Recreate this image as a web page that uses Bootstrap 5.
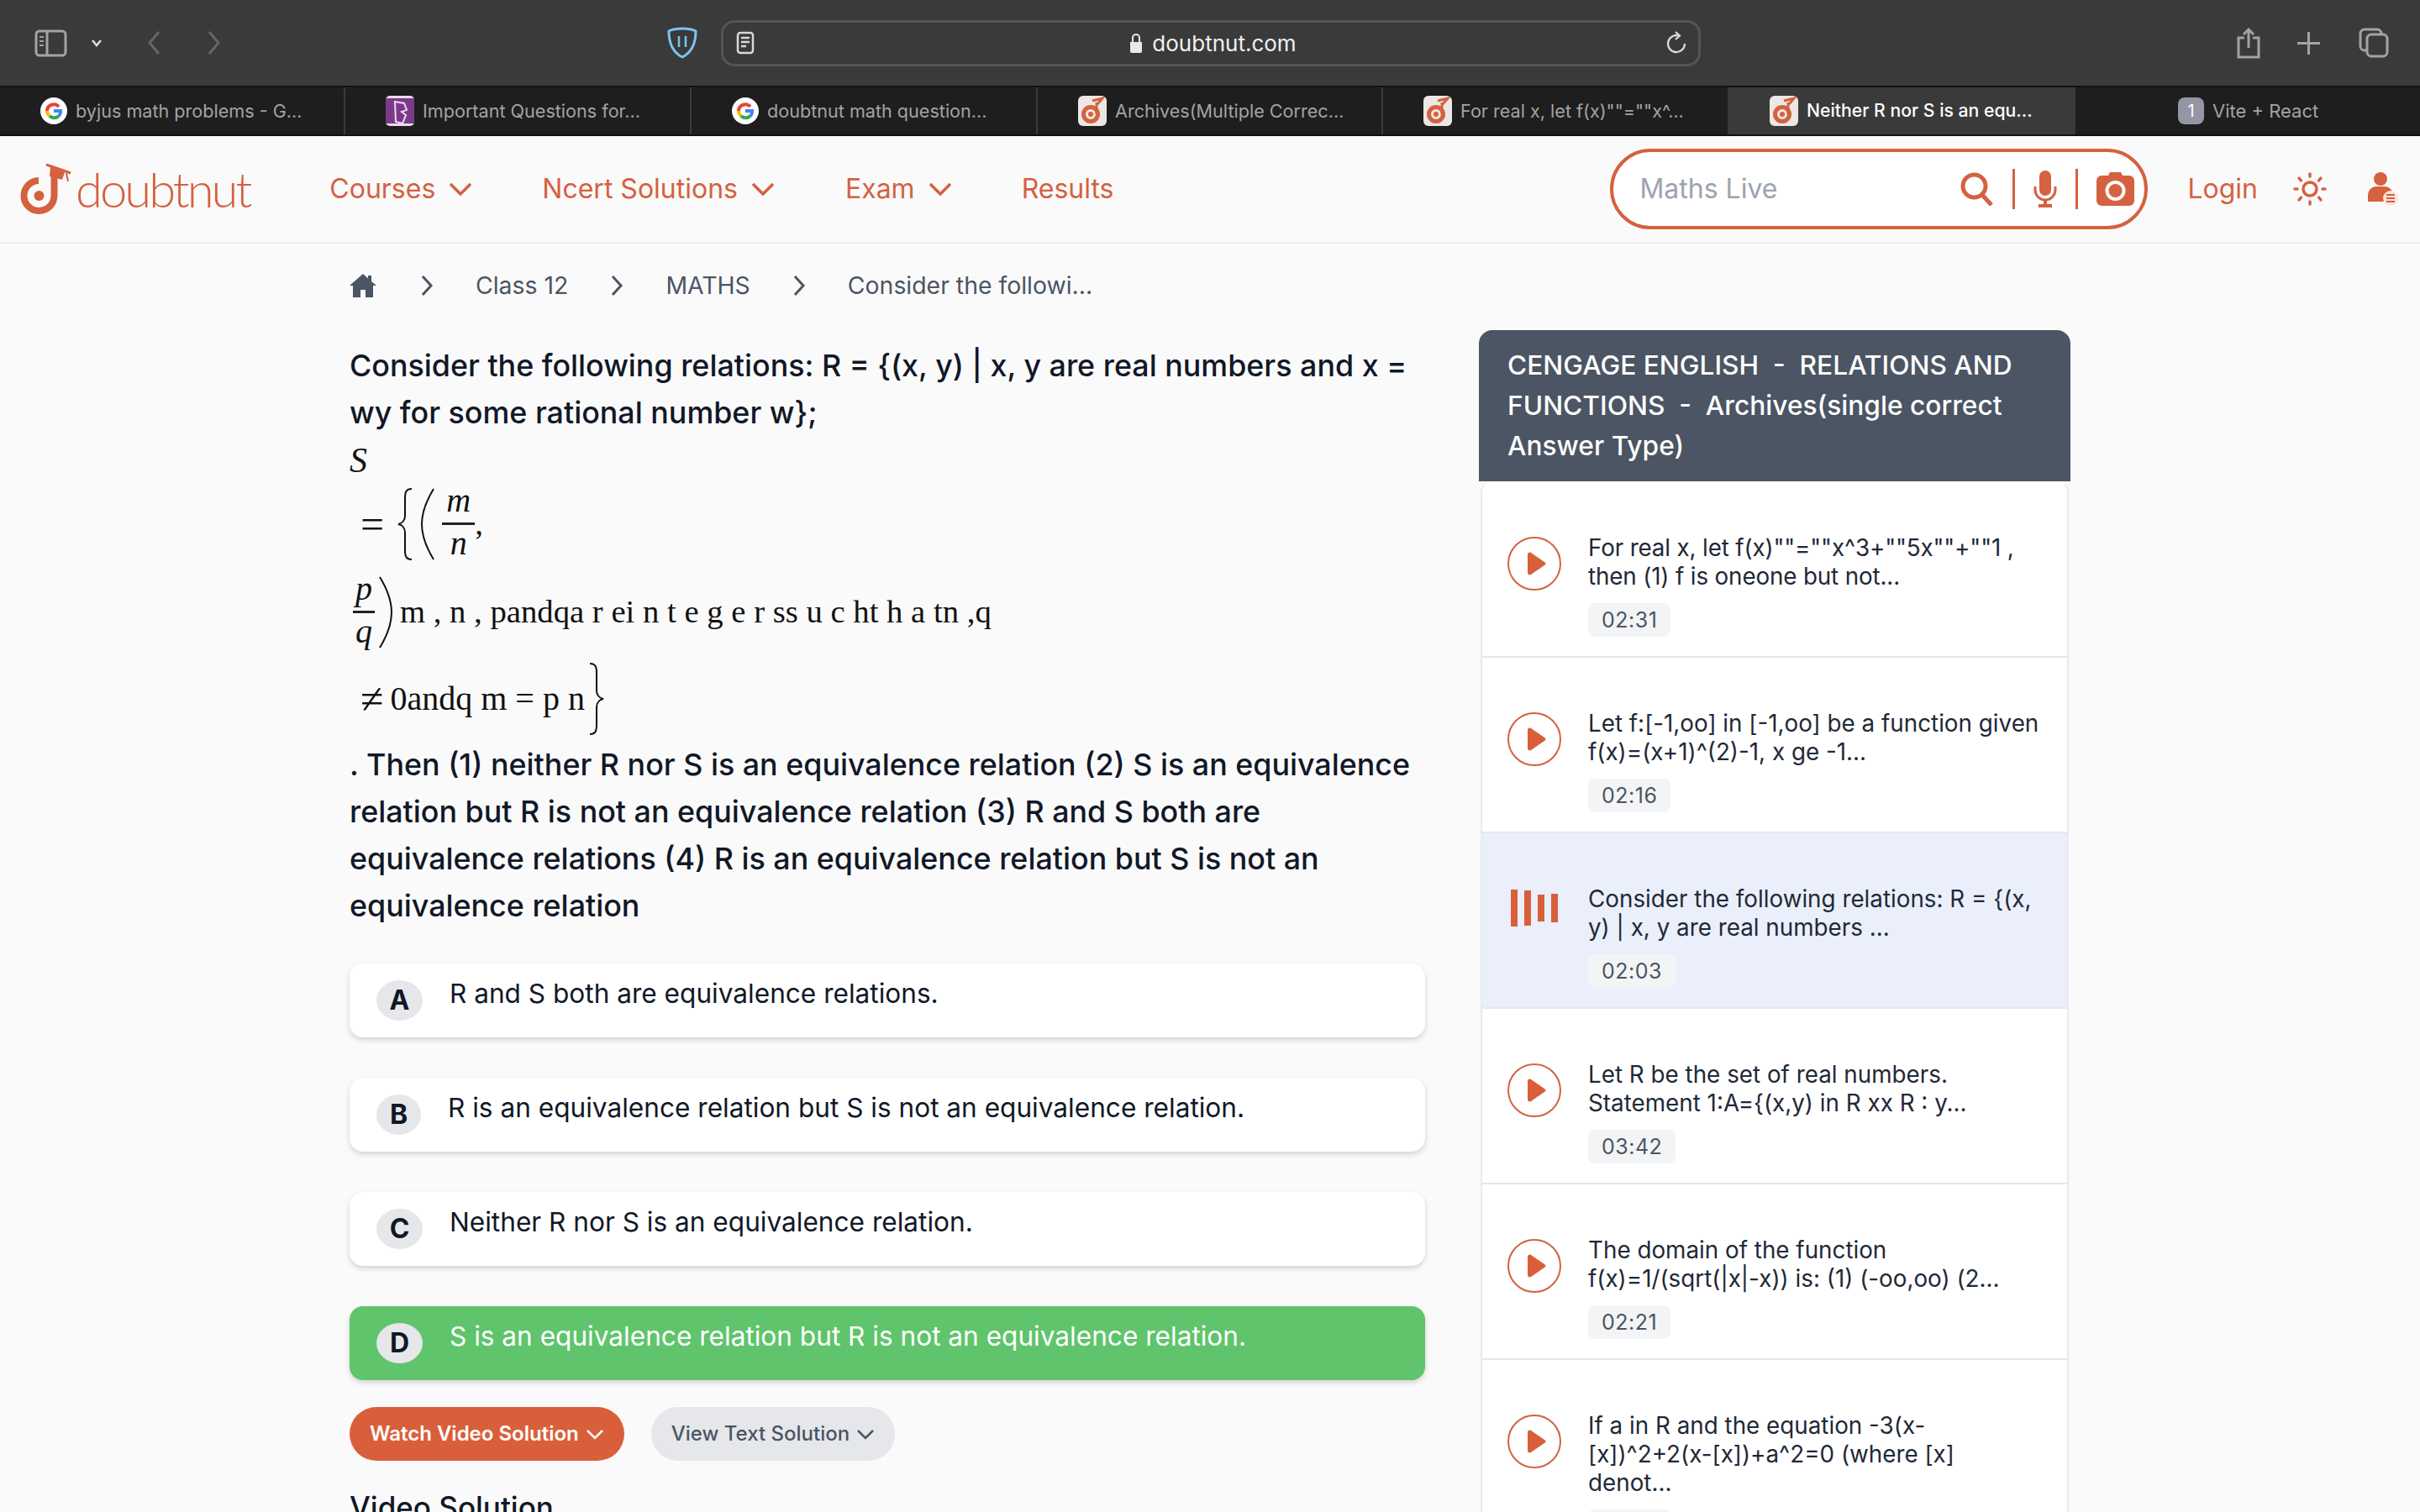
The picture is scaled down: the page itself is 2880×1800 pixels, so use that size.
<!DOCTYPE html>
<html lang="en">
<head>
<meta charset="utf-8">
<title>doubtnut</title>
<link href="https://cdn.jsdelivr.net/npm/bootstrap@5.3.0/dist/css/bootstrap.min.css" rel="stylesheet">
<style>
html,body{margin:0;height:1800px;overflow:hidden}
body{width:2880px;background:#fafafa;font-family:Inter,"Noto Sans",sans-serif;color:#111827}
svg{display:block;flex:none}
.tool-bar{height:104px;background:#3a3a3a;border-bottom:2px solid #111;position:relative}
.m-side{margin-left:41px}.m-chev{margin-left:29px}.m-back{margin-left:54px}.m-fwd{margin-left:56px}
.m-shield{margin-left:530px}.m-url{margin-left:27px}.m-share{margin-left:637px}.m-plus{margin-left:43px}.m-tabs{margin-left:46px}
.url-box{width:1166px;height:55px;border:3px solid #555;border-radius:16px;padding:0 14px 0 15px;color:#f0f0f0;font-size:26px}
.url-c{flex:1;gap:11px;padding-left:6px}
.tab-strip{display:grid;grid-template-columns:411px 412px 412px 411px 412px 412px 408px;height:58px;background:#1e1e1e;border-bottom:2px solid #111}
.tab-it{height:56px;border-right:2px solid #3a3a3a;padding-left:48px;gap:10px;color:#a3a3a3;font-size:21.6px;white-space:nowrap;overflow:hidden}
.tab-it.on{background:#3a3a3a;color:#fff;font-weight:500;border-right:0;font-size:21.2px}
.tab-it.last{border-right:0;padding-left:122px;gap:10px;background:#1e1e1e;font-size:22px}
.fav{width:34px;height:36px;border-radius:6px;background:#ece7e4;flex:none}
.fav-num{width:31px;height:32px;border-radius:8px;background:#9496a3;color:#fff;font-size:20px;text-align:center;line-height:32px}
.site-nav{height:128px;background:#fafafa;border-bottom:2px solid #ececec;padding-left:24px;color:#d4613f}
.brand-wd{font-family:Lato,sans-serif;font-weight:300;font-size:58px;line-height:70px;color:#d4613f;margin-left:4px;letter-spacing:-3px}
.nav-lk{font-size:32px;font-weight:400;color:#d4613f;gap:16px}
.m-n1{margin-left:95px}.m-n2{margin-left:83px}.m-n3{margin-left:84px}.m-n4{margin-left:83px}
.srch{width:640px;height:96px;border:4px solid #d4613f;border-radius:50px;background:#fff;margin-left:auto;padding:0 12px 0 31px}
.srch-ph{font-size:32px;color:#9ca3af;flex:1}
.vbar{width:3px;height:48px;background:#d4613f;margin:0 22px}
.login-lk{font-size:32px;color:#d4613f;margin-left:47px}
.m-sun{margin-left:41px}.m-usr{margin-left:48px;margin-right:26px}
.page-wrap{padding-left:416px;gap:64px}
.left-col{width:1280px}
.crumbs{height:100px;color:#4b5563;font-size:28.4px}
.crumb-a{margin-left:52px}.crumb-b{margin-left:50px}
.q-text{font-size:35.85px;font-weight:500;line-height:56px;color:#111827}
.q-top{margin-top:17px}
.mth{font-family:"Liberation Serif",serif;font-weight:400;font-size:38.700px;color:#111}
.mth i{font-style:italic}
.mth-s{height:52px;line-height:58px;font-size:42px}
.mth-1{height:105px;padding-left:13px}
.mth-2{height:105px;padding-left:4px}
.mth-3{height:101px;padding-left:13px;font-size:40px}
.mth-eq{font-size:50px;line-height:1}
.m-brace{margin-left:15px}
.frac{width:39px;text-align:center;line-height:44px;font-size:40px}
.frac.nr{width:26px}
.frac-u{line-height:36px;padding-bottom:8px}
.frac-b{border-top:3px solid #222}
.q-rest{margin-bottom:41px}
.opt-card{height:88px;border-radius:16px;background:#fff;box-shadow:0 3px 6px rgba(0,0,0,.16);margin-bottom:48px;padding:20px 32px;gap:32px;font-size:31.6px;line-height:38px}
.opt-card.good{background:#60c46c;color:#fff;margin-bottom:32px}
.opt-bd{width:55px;height:48px;border-radius:50%;background:#e5e7eb;color:#111827;font-weight:700;font-size:32px;flex:none;display:flex;align-items:center;justify-content:center}
.opt-bd.nar{width:53px}
.opt-tx{margin-top:-3px}
.pill-a,.pill-b{height:64px;border-radius:32px;font-size:24px;font-weight:600;gap:8px;padding:0 24px;border:0}
.pill-a{background:#d95f3b;color:#fff}
.pill-b{background:#e5e7eb;color:#4b5563;margin-left:32px;font-weight:500}
.vs-h{font-size:35px;font-weight:500;margin-top:27px;line-height:56px}
.side-col{width:704px;margin-top:103px}
.side-h{background:#4b5563;color:#fff;font-size:31.700px;font-weight:500;line-height:48px;border-radius:16px 16px 0 0;padding:18px 34px 18px;height:180px}
.side-l{margin:1px 2px 0;background:#fff;border-radius:12px 12px 0 0;border:2px solid #e8eaee;border-top:0;border-bottom:0}
.side-r{border-bottom:2px solid #e5e7eb;padding:61px 30px 25px 30px;gap:32px;height:209px}
.side-r>svg{margin-top:4px}
.side-r.act{background:#eaeffb}
.side-r.lastr{height:auto}
.side-t{font-size:27.800px;line-height:34px;color:#1f2937}
.side-t.tight{letter-spacing:-.15px}
.chip-t{display:inline-block;margin-top:15px;height:40px;line-height:40px;padding:0 16px;background:#f3f4f6;color:#4b5563;border-radius:8px;font-size:25px;letter-spacing:.5px}
</style>
</head>
<body>
<header class="tool-bar d-flex align-items-center">
  <svg class="m-side" width="39" height="33" viewBox="0 0 39 33" fill="none" stroke="#a3a3a3" stroke-width="3"><rect x="2" y="2" width="35" height="29" rx="4"/><path d="M15 2v29"/><path d="M6 9h5M6 14h5M6 19h5" stroke-width="2"/></svg>
  <svg class="m-chev" width="12" height="10" viewBox="0 0 12 10" fill="none" stroke="#ddd" stroke-width="2.5"><path d="M1 2l5 6 5-6"/></svg>
  <svg class="m-back" width="16" height="30" viewBox="0 0 16 30" fill="none" stroke="#666" stroke-width="3"><path d="M14 2L3 15l11 13"/></svg>
  <svg class="m-fwd" width="16" height="30" viewBox="0 0 16 30" fill="none" stroke="#666" stroke-width="3"><path d="M2 2l11 13L2 28"/></svg>
  <svg class="m-shield" width="38" height="38" viewBox="0 0 38 38" fill="none" stroke="#7cc4f0" stroke-width="3"><path d="M19 2c6 0 12 1 16 3 0 14-4 25-16 31C7 30 3 19 3 5c4-2 10-3 16-3z"/><path d="M15 11v13M23 11v13" stroke-width="2.5"/></svg>
  <div class="url-box m-url d-flex align-items-center">
    <svg width="22" height="28" viewBox="0 0 22 28" fill="none" stroke="#d8d8d8" stroke-width="2.5"><rect x="2" y="2" width="18" height="24" rx="3"/><path d="M6 8h10M6 13h10M6 18h6"/></svg>
    <div class="url-c d-flex align-items-center justify-content-center">
      <svg width="16" height="24" viewBox="0 0 16 24" fill="#e8e8e8"><path d="M1 11h14v11a2 2 0 0 1-2 2H3a2 2 0 0 1-2-2z"/><path d="M4 11V6a4 4 0 0 1 8 0v5" fill="none" stroke="#e8e8e8" stroke-width="2"/></svg>
      <span>doubtnut.com</span>
    </div>
    <svg width="24" height="28" viewBox="0 0 24 28" fill="none" stroke="#d8d8d8" stroke-width="2.3"><path d="M15 5.500A10 10 0 1 0 22 15"/><path d="M11 1l5 4.500-5 4.500"/></svg>
  </div>
  <svg class="m-share" width="30" height="37" viewBox="0 0 30 37" fill="none" stroke="#a3a3a3" stroke-width="3"><path d="M10 12H3v23h24V12h-7"/><path d="M15 24V2M9 8l6-6 6 6"/></svg>
  <svg class="m-plus" width="27" height="27" viewBox="0 0 27 27" fill="none" stroke="#a3a3a3" stroke-width="3"><path d="M13.500 0v27M0 13.500h27"/></svg>
  <svg class="m-tabs" width="36" height="36" viewBox="0 0 36 36" fill="none" stroke="#a3a3a3" stroke-width="3"><rect x="10" y="8" width="24" height="26" rx="5"/><path d="M10 27H7a5 5 0 0 1-5-5V7a5 5 0 0 1 5-5h15a5 5 0 0 1 5 5v1"/></svg>
</header>
<nav class="tab-strip">
  <div class="tab-it d-flex align-items-center"><svg width="32" height="32" viewBox="0 0 32 32"><circle cx="16" cy="16" r="16" fill="#fff"/><path d="M8 16a8 8 0 0 1 14-5" fill="none" stroke="#ea4335" stroke-width="4"/><path d="M8 16a8 8 0 0 0 3 6" fill="none" stroke="#fbbc05" stroke-width="4"/><path d="M11 22a8 8 0 0 0 11 0" fill="none" stroke="#34a853" stroke-width="4"/><path d="M16 16h8a8 8 0 0 1-2 6" fill="none" stroke="#4285f4" stroke-width="4"/></svg><span>byjus math problems - G...</span></div>
  <div class="tab-it d-flex align-items-center"><svg width="34" height="36" viewBox="0 0 34 36"><rect width="34" height="36" rx="5" fill="#f0d9ee"/><rect y="3" width="34" height="30" fill="#7a3a8c"/><path d="M11 7l11 2 3 8-6 2 5 4-4 10-8-2z" fill="none" stroke="#f0d9ee" stroke-width="2"/></svg><span>Important Questions for...</span></div>
  <div class="tab-it d-flex align-items-center"><svg width="32" height="32" viewBox="0 0 32 32"><circle cx="16" cy="16" r="16" fill="#fff"/><path d="M8 16a8 8 0 0 1 14-5" fill="none" stroke="#ea4335" stroke-width="4"/><path d="M8 16a8 8 0 0 0 3 6" fill="none" stroke="#fbbc05" stroke-width="4"/><path d="M11 22a8 8 0 0 0 11 0" fill="none" stroke="#34a853" stroke-width="4"/><path d="M16 16h8a8 8 0 0 1-2 6" fill="none" stroke="#4285f4" stroke-width="4"/></svg><span>doubtnut math question...</span></div>
  <div class="tab-it d-flex align-items-center"><svg class="fav" viewBox="0 0 34 36"><circle cx="15" cy="22" r="8.500" fill="none" stroke="#d4613f" stroke-width="5"/><circle cx="15" cy="22" r="3" fill="#d4613f"/><path d="M22 22V8M17 6l12-3-6 7" fill="none" stroke="#d4613f" stroke-width="3"/></svg><span>Archives(Multiple Correc...</span></div>
  <div class="tab-it d-flex align-items-center"><svg class="fav" viewBox="0 0 34 36"><circle cx="15" cy="22" r="8.500" fill="none" stroke="#d4613f" stroke-width="5"/><circle cx="15" cy="22" r="3" fill="#d4613f"/><path d="M22 22V8M17 6l12-3-6 7" fill="none" stroke="#d4613f" stroke-width="3"/></svg><span>For real x, let f(x)""=""x^...</span></div>
  <div class="tab-it on d-flex align-items-center"><svg class="fav" viewBox="0 0 34 36"><circle cx="15" cy="22" r="8.500" fill="none" stroke="#d4613f" stroke-width="5"/><circle cx="15" cy="22" r="3" fill="#d4613f"/><path d="M22 22V8M17 6l12-3-6 7" fill="none" stroke="#d4613f" stroke-width="3"/></svg><span>Neither R nor S is an equ...</span></div>
  <div class="tab-it last d-flex align-items-center"><span class="fav-num">1</span><span>Vite + React</span></div>
</nav>
<div class="site-nav d-flex align-items-center">
  <svg width="62" height="66" viewBox="0 0 62 66" fill="none"><path d="M22 23a18 18 0 1 0 18.500 18V17" stroke="#d4613f" stroke-width="8"/><circle cx="22.500" cy="41" r="6" fill="#d4613f"/><path d="M31 4l29 10" stroke="#d4613f" stroke-width="3"/><path d="M36 7l17 6-3 9-15-4z" fill="#d4613f"/><path d="M55 14l2 10" stroke="#d4613f" stroke-width="2"/></svg>
  <span class="brand-wd">doubtnut</span>
  <a class="nav-lk m-n1 d-flex align-items-center text-decoration-none">Courses<svg width="28" height="16" viewBox="0 0 28 16" fill="none" stroke="#d4613f" stroke-width="3.500"><path d="M2 2l12 12L26 2"/></svg></a>
  <a class="nav-lk m-n2 d-flex align-items-center text-decoration-none">Ncert Solutions<svg width="28" height="16" viewBox="0 0 28 16" fill="none" stroke="#d4613f" stroke-width="3.500"><path d="M2 2l12 12L26 2"/></svg></a>
  <a class="nav-lk m-n3 d-flex align-items-center text-decoration-none">Exam<svg width="28" height="16" viewBox="0 0 28 16" fill="none" stroke="#d4613f" stroke-width="3.500"><path d="M2 2l12 12L26 2"/></svg></a>
  <a class="nav-lk m-n4 text-decoration-none">Results</a>
  <div class="srch d-flex align-items-center">
    <span class="srch-ph">Maths Live</span>
    <svg width="40" height="40" viewBox="0 0 40 40" fill="none" stroke="#d4613f" stroke-width="5"><circle cx="16.500" cy="16.500" r="13.500"/><path d="M26 27l11 12"/></svg>
    <span class="vbar"></span>
    <svg width="28" height="44" viewBox="0 0 28 44" fill="#d4613f"><rect x="7" y="0" width="14" height="30" rx="7"/><path d="M2 19v4a12 12 0 0 0 24 0v-4" fill="none" stroke="#d4613f" stroke-width="3"/><path d="M14 34v6M6 42h16" stroke="#d4613f" stroke-width="4"/></svg>
    <span class="vbar"></span>
    <svg width="45" height="40" viewBox="0 0 45 40"><path d="M14 4l2-4h13l2 4h8a6 6 0 0 1 6 6v24a6 6 0 0 1-6 6H6a6 6 0 0 1-6-6V10a6 6 0 0 1 6-6z" fill="#d4613f"/><circle cx="22.500" cy="22" r="10" fill="none" stroke="#fff" stroke-width="4"/></svg>
  </div>
  <a class="login-lk text-decoration-none">Login</a>
  <svg class="m-sun" width="42" height="40" viewBox="0 0 42 40" fill="none" stroke="#d4613f" stroke-width="3.500" stroke-linecap="round"><circle cx="21" cy="20" r="8"/><path d="M21 2v3M21 35v3M3 20h3M36 20h3M8 7l2.500 3M34 7l-2.500 3M8 33l2.500-3M34 33l-2.500-3"/></svg>
  <svg class="m-usr" width="36" height="42" viewBox="0 0 36 42"><circle cx="15" cy="9" r="8" fill="#d4613f"/><path d="M0 36V28a10 10 0 0 1 10-10h10a10 10 0 0 1 10 10v8z" fill="#d4613f"/><circle cx="27" cy="32" r="9" fill="#fbe3dc"/><path d="M22 28h10M22 32h10M22 36h10" stroke="#d4613f" stroke-width="2"/></svg>
</div>
<div class="page-wrap d-flex">
  <main class="left-col">
    <div class="crumbs d-flex align-items-center">
      <svg width="32" height="28" viewBox="0 0 32 28" fill="#4b5563"><path d="M16 0L0 14h4v14h9v-9h6v9h9V14h4l-6-5V2h-4v3.500z"/></svg>
      <svg class="crumb-a" width="16" height="26" viewBox="0 0 16 26" fill="none" stroke="#4b5563" stroke-width="3"><path d="M3 2l10 11L3 24"/></svg>
      <span class="crumb-b">Class 12</span>
      <svg class="crumb-b" width="16" height="26" viewBox="0 0 16 26" fill="none" stroke="#4b5563" stroke-width="3"><path d="M3 2l10 11L3 24"/></svg>
      <span class="crumb-b">MATHS</span>
      <svg class="crumb-b" width="16" height="26" viewBox="0 0 16 26" fill="none" stroke="#4b5563" stroke-width="3"><path d="M3 2l10 11L3 24"/></svg>
      <span class="crumb-b">Consider the followi...</span>
    </div>
    <div class="q-text q-top">Consider the following relations: R = {(x, y) | x, y are real numbers and x = wy for some rational number w};</div>
    <div class="mth mth-s"><i>S</i></div>
    <div class="mth mth-1 d-flex align-items-center">
      <span class="mth-eq">=</span>
      <svg class="m-brace" width="20" height="88" viewBox="0 0 20 88" fill="none" stroke="#111" stroke-width="2"><path d="M18 2C10 2 10 8 10 14v20c0 5-3 9-8 10 5 1 8 5 8 10v20c0 6 0 12 8 12"/></svg>
      <svg class="ms-2" width="18" height="88" viewBox="0 0 18 88" fill="none" stroke="#111" stroke-width="2"><path d="M16 2C5 20 2 32 2 44s3 24 14 42"/></svg>
      <div class="frac ms-2"><div class="frac-u"><i>m</i></div><div class="frac-b"><i>n</i></div></div>
      <span>,</span>
    </div>
    <div class="mth mth-2 d-flex align-items-center">
      <div class="frac nr"><div class="frac-u"><i>p</i></div><div class="frac-b"><i>q</i></div></div>
      <svg class="ms-1" width="18" height="88" viewBox="0 0 18 88" fill="none" stroke="#111" stroke-width="2"><path d="M2 2c11 18 14 30 14 42s-3 24-14 42"/></svg>
      <span class="ms-2">m , n , pandqa r ei n t e g e r ss u c ht h a tn ,q</span>
    </div>
    <div class="mth mth-3 d-flex align-items-center">
      <span class="mth-eq">≠</span><span class="ms-2">0andq m = p n</span>
      <svg class="ms-1" width="20" height="88" viewBox="0 0 20 88" fill="none" stroke="#111" stroke-width="2"><path d="M2 2c8 0 8 6 8 12v20c0 5 3 9 8 10-5 1-8 5-8 10v20c0 6 0 12-8 12"/></svg>
    </div>
    <div class="q-text q-rest">. Then (1) neither R nor S is an equivalence relation (2) S is an equivalence relation but R is not an equivalence relation (3) R and S both are equivalence relations (4) R is an equivalence relation but S is not an equivalence relation</div>
    <div class="opt-card d-flex"><span class="opt-bd">A</span><span class="opt-tx">R and S both are equivalence relations.</span></div>
    <div class="opt-card d-flex"><span class="opt-bd nar">B</span><span class="opt-tx">R is an equivalence relation but S is not an equivalence relation.</span></div>
    <div class="opt-card d-flex"><span class="opt-bd">C</span><span class="opt-tx">Neither R nor S is an equivalence relation.</span></div>
    <div class="opt-card good d-flex"><span class="opt-bd">D</span><span class="opt-tx">S is an equivalence relation but R is not an equivalence relation.</span></div>
    <div class="d-flex">
      <button class="pill-a d-flex align-items-center">Watch Video Solution<svg width="22" height="13" viewBox="0 0 22 13" fill="none" stroke="#fff" stroke-width="2.500"><path d="M2 2l9 9 9-9"/></svg></button>
      <button class="pill-b d-flex align-items-center">View Text Solution<svg width="22" height="13" viewBox="0 0 22 13" fill="none" stroke="#4b5563" stroke-width="2.500"><path d="M2 2l9 9 9-9"/></svg></button>
    </div>
    <div class="vs-h">Video Solution</div>
  </main>
  <aside class="side-col">
    <div class="side-h">CENGAGE ENGLISH&nbsp; -&nbsp; RELATIONS AND FUNCTIONS&nbsp; -&nbsp; Archives(single correct Answer Type)</div>
    <div class="side-l">
      <div class="side-r d-flex"><svg width="64" height="64" viewBox="0 0 64 64"><circle cx="32" cy="32" r="31" fill="none" stroke="#d4613f" stroke-width="2"/><path d="M24 21c0-2 2-3 4-2l16 11c2 1 2 3 0 4L28 45c-2 1-4 0-4-2z" fill="#d95f3b"/></svg><div><div class="side-t tight">For real x, let f(x)""=""x^3+""5x""+""1 , then (1) f is oneone but not...</div><span class="chip-t">02:31</span></div></div>
      <div class="side-r d-flex"><svg width="64" height="64" viewBox="0 0 64 64"><circle cx="32" cy="32" r="31" fill="none" stroke="#d4613f" stroke-width="2"/><path d="M24 21c0-2 2-3 4-2l16 11c2 1 2 3 0 4L28 45c-2 1-4 0-4-2z" fill="#d95f3b"/></svg><div><div class="side-t">Let f:[-1,oo] in [-1,oo] be a function given f(x)=(x+1)^(2)-1, x ge -1...</div><span class="chip-t">02:16</span></div></div>
      <div class="side-r act d-flex"><svg width="64" height="64" viewBox="0 0 64 64" fill="#d95f3b"><rect x="4" y="2" width="8" height="44"/><rect x="20" y="3" width="8" height="42"/><rect x="36" y="8" width="8" height="32"/><rect x="52" y="7" width="8" height="34"/></svg><div><div class="side-t">Consider the following relations: R = {(x, y) | x, y are real numbers ...</div><span class="chip-t">02:03</span></div></div>
      <div class="side-r d-flex"><svg width="64" height="64" viewBox="0 0 64 64"><circle cx="32" cy="32" r="31" fill="none" stroke="#d4613f" stroke-width="2"/><path d="M24 21c0-2 2-3 4-2l16 11c2 1 2 3 0 4L28 45c-2 1-4 0-4-2z" fill="#d95f3b"/></svg><div><div class="side-t">Let R be the set of real numbers. Statement 1:A={(x,y) in R xx R : y...</div><span class="chip-t">03:42</span></div></div>
      <div class="side-r d-flex"><svg width="64" height="64" viewBox="0 0 64 64"><circle cx="32" cy="32" r="31" fill="none" stroke="#d4613f" stroke-width="2"/><path d="M24 21c0-2 2-3 4-2l16 11c2 1 2 3 0 4L28 45c-2 1-4 0-4-2z" fill="#d95f3b"/></svg><div><div class="side-t">The domain of the function f(x)=1/(sqrt(|x|-x)) is: (1) (-oo,oo) (2...</div><span class="chip-t">02:21</span></div></div>
      <div class="side-r lastr d-flex"><svg width="64" height="64" viewBox="0 0 64 64"><circle cx="32" cy="32" r="31" fill="none" stroke="#d4613f" stroke-width="2"/><path d="M24 21c0-2 2-3 4-2l16 11c2 1 2 3 0 4L28 45c-2 1-4 0-4-2z" fill="#d95f3b"/></svg><div><div class="side-t">If a in R and the equation -3(x-[x])^2+2(x-[x])+a^2=0 (where [x] denot...</div><span class="chip-t">02:10</span></div></div>
    </div>
  </aside>
</div>
</body>
</html>
